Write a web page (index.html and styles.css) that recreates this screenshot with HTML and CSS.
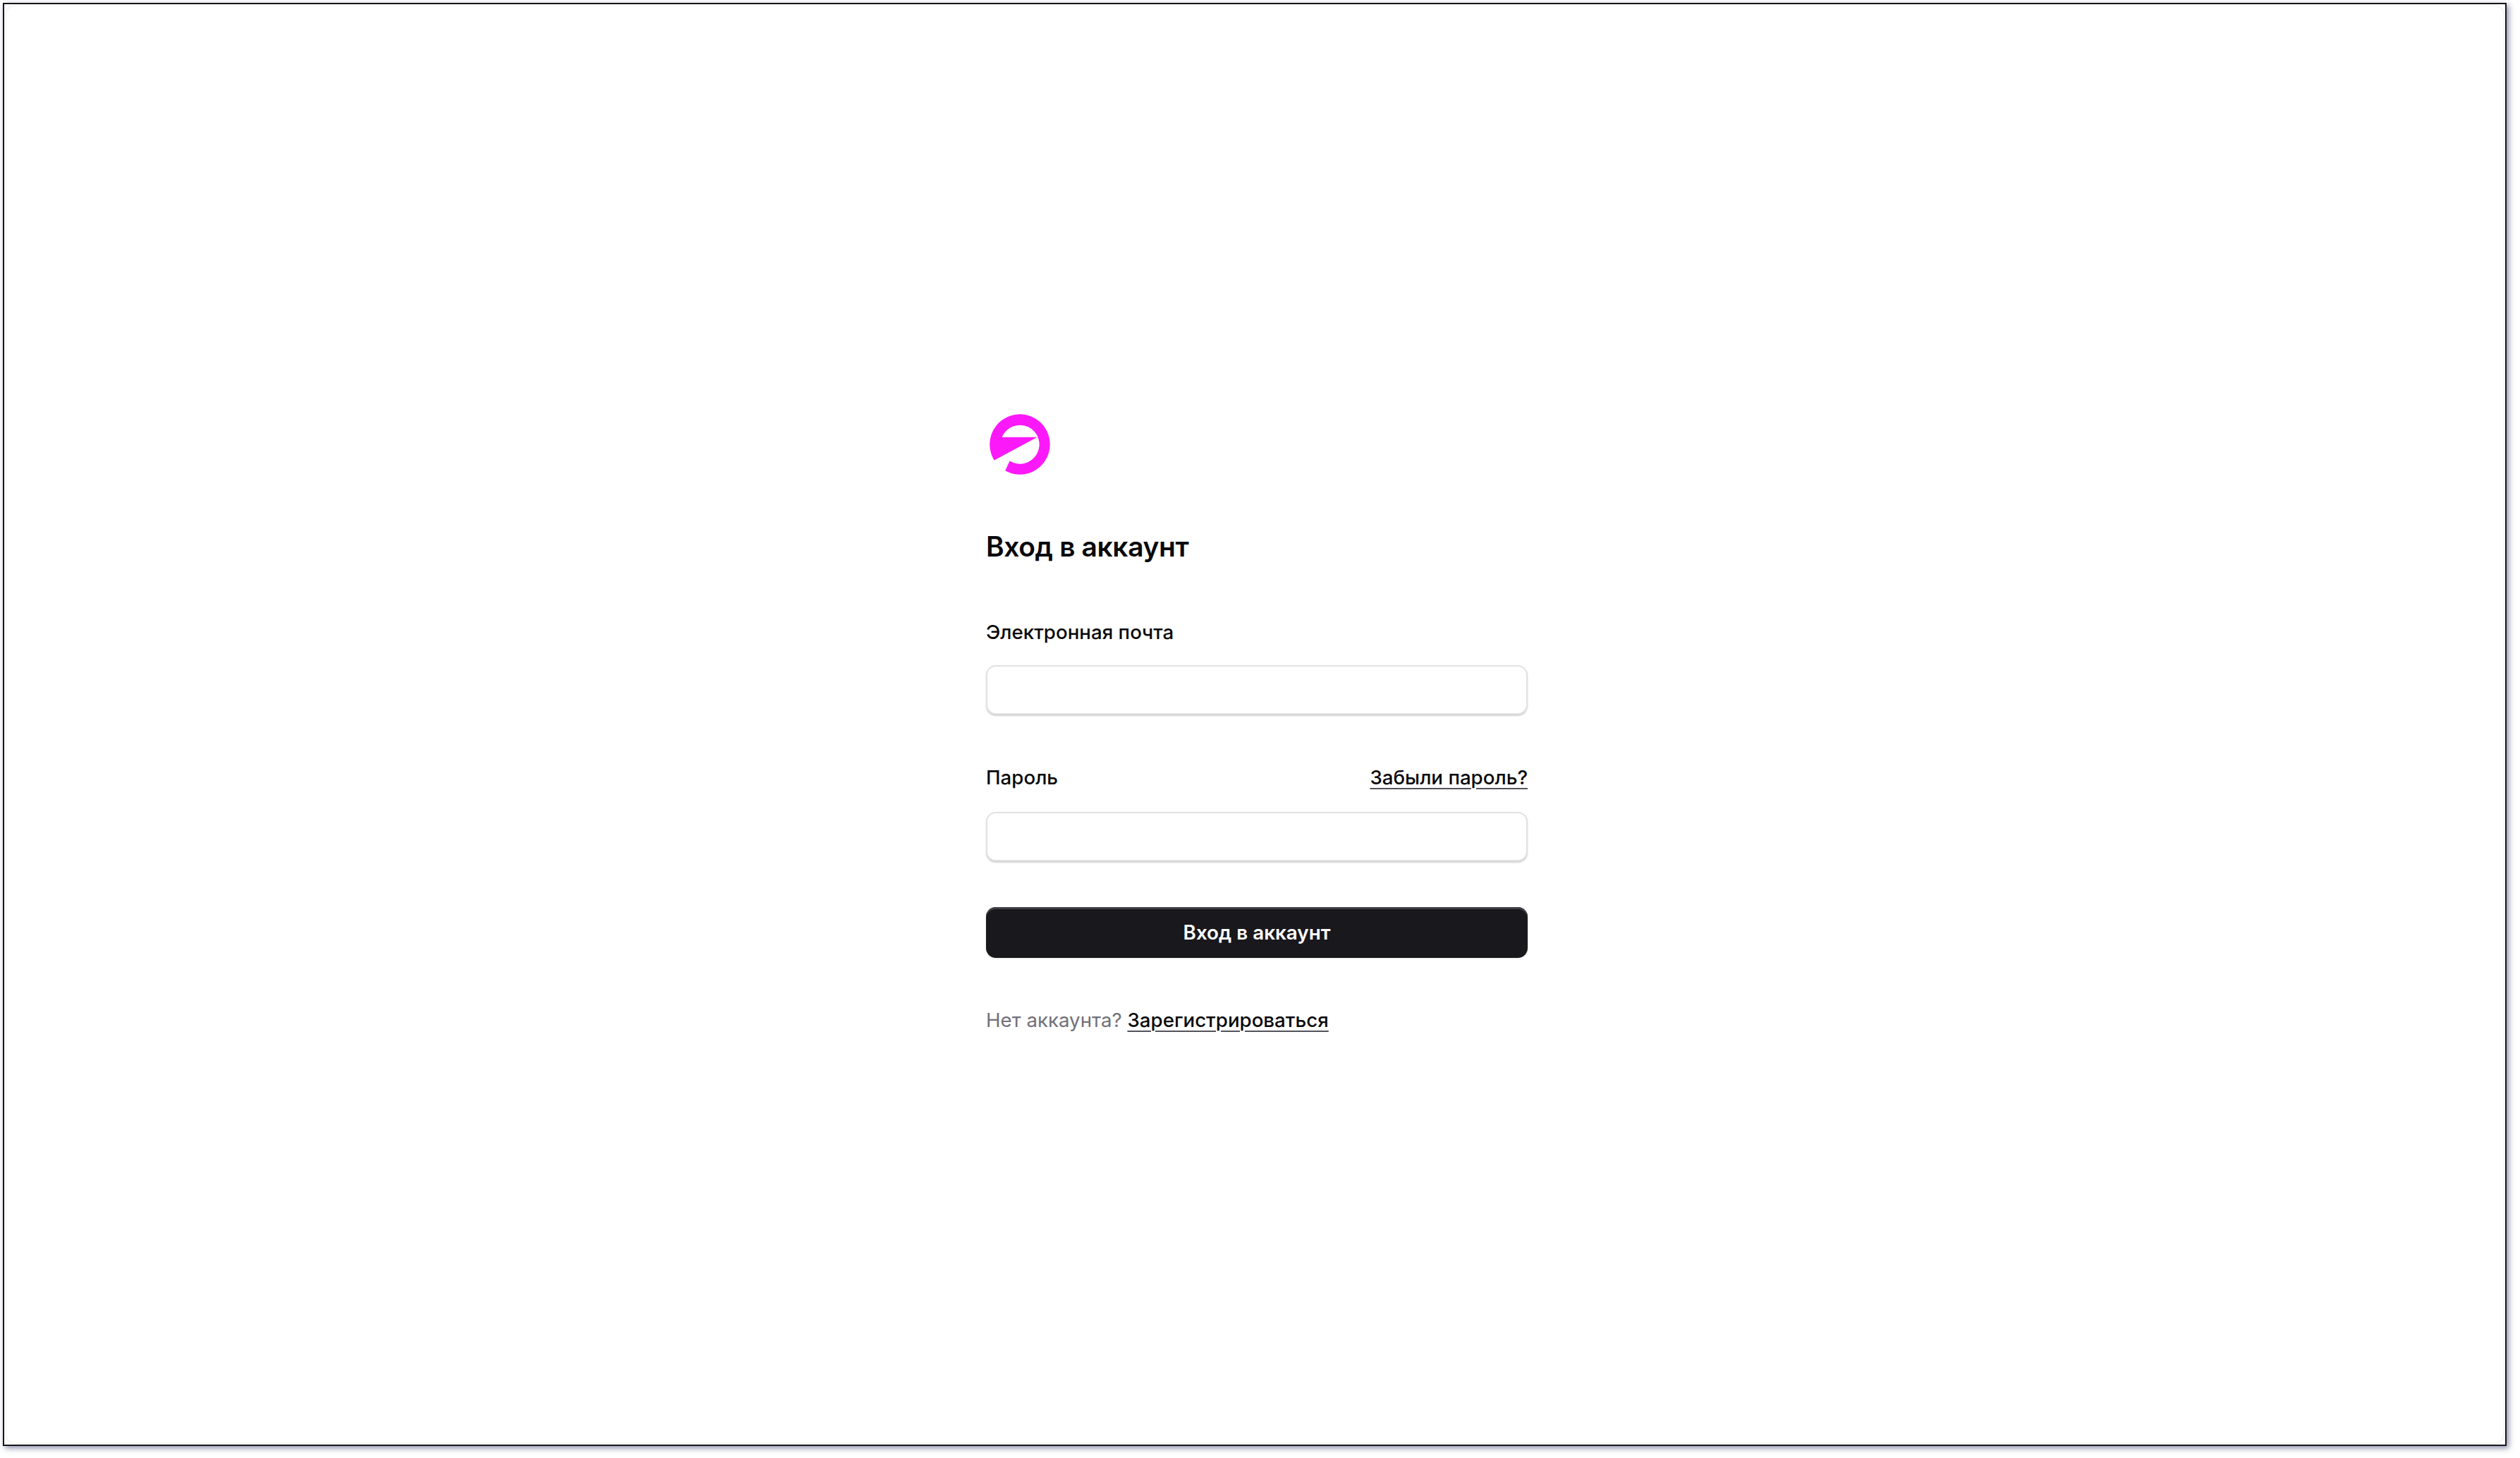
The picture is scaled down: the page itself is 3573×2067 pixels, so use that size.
FILE: index.html
```html
<!DOCTYPE html>
<html lang="ru">
<head>
  <meta charset="UTF-8">
  <meta name="viewport" content="width=device-width, initial-scale=1.0">
  <title>Вход в аккаунт</title>
  <link rel="stylesheet" href="styles.css">
</head>
<body>
  <div class="frame">
    <div class="login-box">
      <svg class="logo" viewBox="0 0 86 86" aria-hidden="true">
        <path d="M6.7 65.5A42.7 42.7 0 1 1 22.2 80.3L28.6 66.5A27.5 27.5 0 1 0 17.7 32.7H67.7Z"/>
      </svg>
      <h1 class="title">Вход в аккаунт</h1>
      <form class="form-box">
        <div class="field">
          <div class="label-row"><label class="label" for="email">Электронная почта</label></div>
          <input class="input" id="email" type="email">
        </div>
        <div class="field field-password">
          <div class="label-row">
            <label class="label" for="password">Пароль</label>
            <a class="link" href="#">Забыли пароль?</a>
          </div>
          <input class="input" id="password" type="password">
        </div>
        <button class="btn" type="button">Вход в аккаунт</button>
      </form>
      <p class="signup">Нет аккаунта? <a class="link" href="#">Зарегистрироваться</a></p>
    </div>
  </div>
</body>
</html>
```

FILE: styles.css
```css
* {margin:0; padding:0; box-sizing:border-box}
html, body {height:100%; background:#fff}
body {padding:4px 19px 17px 4px; font-family:Inter, "Noto Sans", sans-serif; color:#09090b}

.frame {position:relative; display:flex; justify-content:center; align-items:center; height:100%; padding:1px 0 0 6px; background:#fff; border:2px solid #16161a; box-shadow:3px 3px 8px #8d90ad}
.frame::before {content:""; position:absolute; inset:0; border:3px solid #f7f7f7; border-radius:16px; pointer-events:none}
.login-box {position:relative; width:768px; display:flex; flex-direction:column; align-items:flex-start}

.logo {display:block; width:86px; height:86px; margin-left:5px; fill:#fc19f9}
.title {margin-top:74px; font-size:39px; line-height:56px; font-weight:600; letter-spacing:-0.4px}

.form-box {width:100%; margin-top:70px}
.field {margin-bottom:66px}
.field-password {margin-bottom:65px}
.field-password .label-row {margin-bottom:26px}
.label-row {display:flex; justify-content:space-between; align-items:center; height:46px; margin-bottom:24px}
.label {font-size:27.7px; font-weight:500}
.link {font-size:27.7px; font-weight:500; color:#09090b; text-decoration:underline; text-decoration-color:#52525b; text-underline-offset:5px; text-decoration-thickness:2px}

.input {display:block; width:100%; height:70px; border:2px solid #e2e2e5; border-radius:14px; background:#fff; box-shadow:0 2px 2px rgba(0,0,0,.18)}

.btn {display:block; width:100%; height:72px; border:0; border-radius:14px; background:#18181d; color:#fff; font:600 27.8px Inter, sans-serif; box-shadow:inset 0 3px 0 #3f3f46, 0 1px 2px rgba(0,0,0,.1)}

.signup {margin-top:65px; font-size:27.7px; line-height:46px; color:#71717a}
```
